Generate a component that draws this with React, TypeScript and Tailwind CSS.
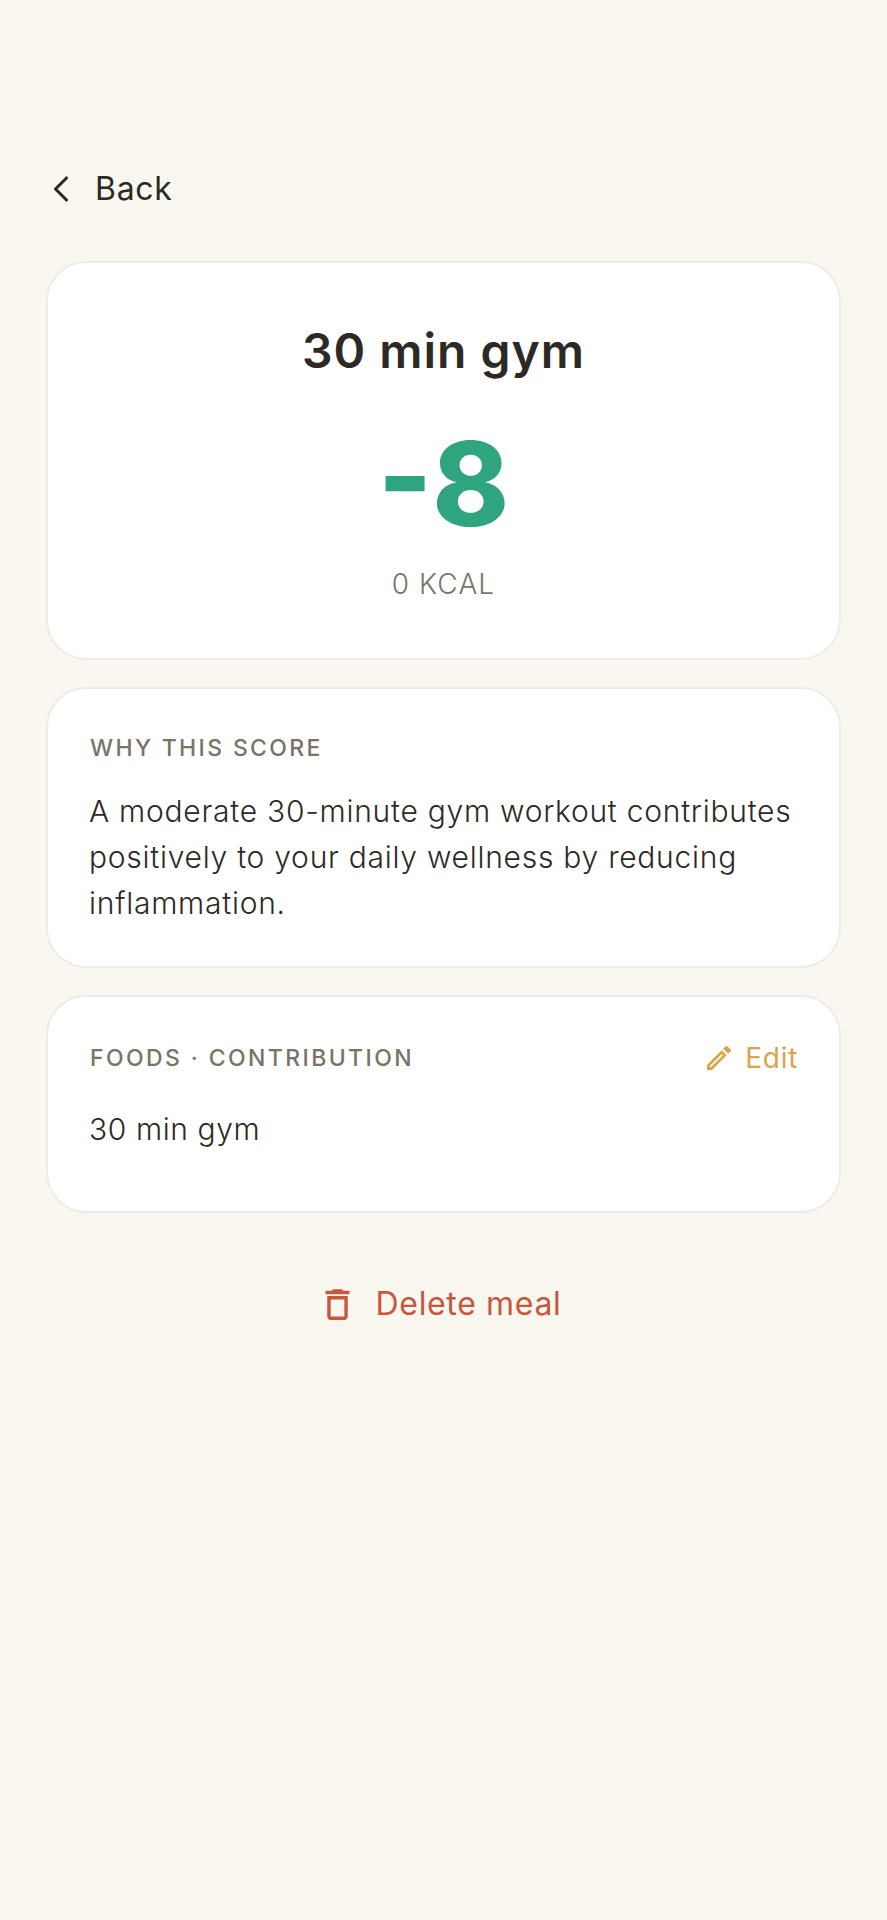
import { ChevronLeft } from 'lucide-react';
import { MdOutlineDelete, MdOutlineEdit } from 'react-icons/md';

export default function App() {
  return (
    <div className="min-h-[1920px] bg-[#faf7f0] px-[46px] pt-[160px] font-['Inter',sans-serif] text-[#2d2a26]">
      <div className="flex items-center gap-[12px] h-[58px]">
        <ChevronLeft size={44} strokeWidth={1.7} className="-ml-[7px]" />
        <span className="text-[32px] tracking-[0.7px]">Back</span>
      </div>

      <div className="mt-[43px] flex flex-col gap-[27px]">
        {/* Score */}
        <section className="h-[399px] rounded-[40px] border-2 border-[#eeece8] bg-white flex flex-col items-center pt-[59px]">
          <h1 className="text-[48px] font-semibold leading-[58px] tracking-[1px]">30 min gym</h1>
          <div className="mt-[44px] text-[116px] leading-[120px] font-extrabold text-[#2ea57e]">-8</div>
          <div className="mt-[19px] text-[28px] font-light tracking-[1.1px] text-[#7a7466]">0 KCAL</div>
        </section>

        {/* Why this score */}
        <section className="h-[281px] rounded-[40px] border-2 border-[#eeece8] bg-white px-[41px] pt-[42px]">
          <h2 className="pl-px text-[23px] font-medium tracking-[2.35px] text-[#7a7466]">WHY THIS SCORE</h2>
          <p className="mt-[22px] text-[30px] font-light leading-[46px] tracking-[0.74px]">
            A moderate 30-minute gym workout contributes positively to your daily wellness by reducing inflammation.
          </p>
        </section>

        {/* Foods */}
        <section className="h-[218px] rounded-[40px] border-2 border-[#eeece8] bg-white px-[41px] pt-[40px]">
          <div className="flex items-center justify-between">
            <h2 className="pl-px text-[23px] font-medium tracking-[2.4px] text-[#7a7466]">FOODS · CONTRIBUTION</h2>
            <div className="flex items-center gap-[10px] text-[#dda348]">
              <MdOutlineEdit size={32} />
              <span className="text-[28px] tracking-[0.7px]">Edit</span>
            </div>
          </div>
          <p className="mt-[28px] text-[30px] font-light tracking-[0.6px]">30 min gym</p>
        </section>
      </div>

      <div className="mt-[67px] flex items-center justify-center gap-[18px] pr-[9px] text-[#c8573c]">
        <MdOutlineDelete size={41} />
        <span className="text-[32px] tracking-[0.65px]">Delete meal</span>
      </div>
    </div>
  );
}
